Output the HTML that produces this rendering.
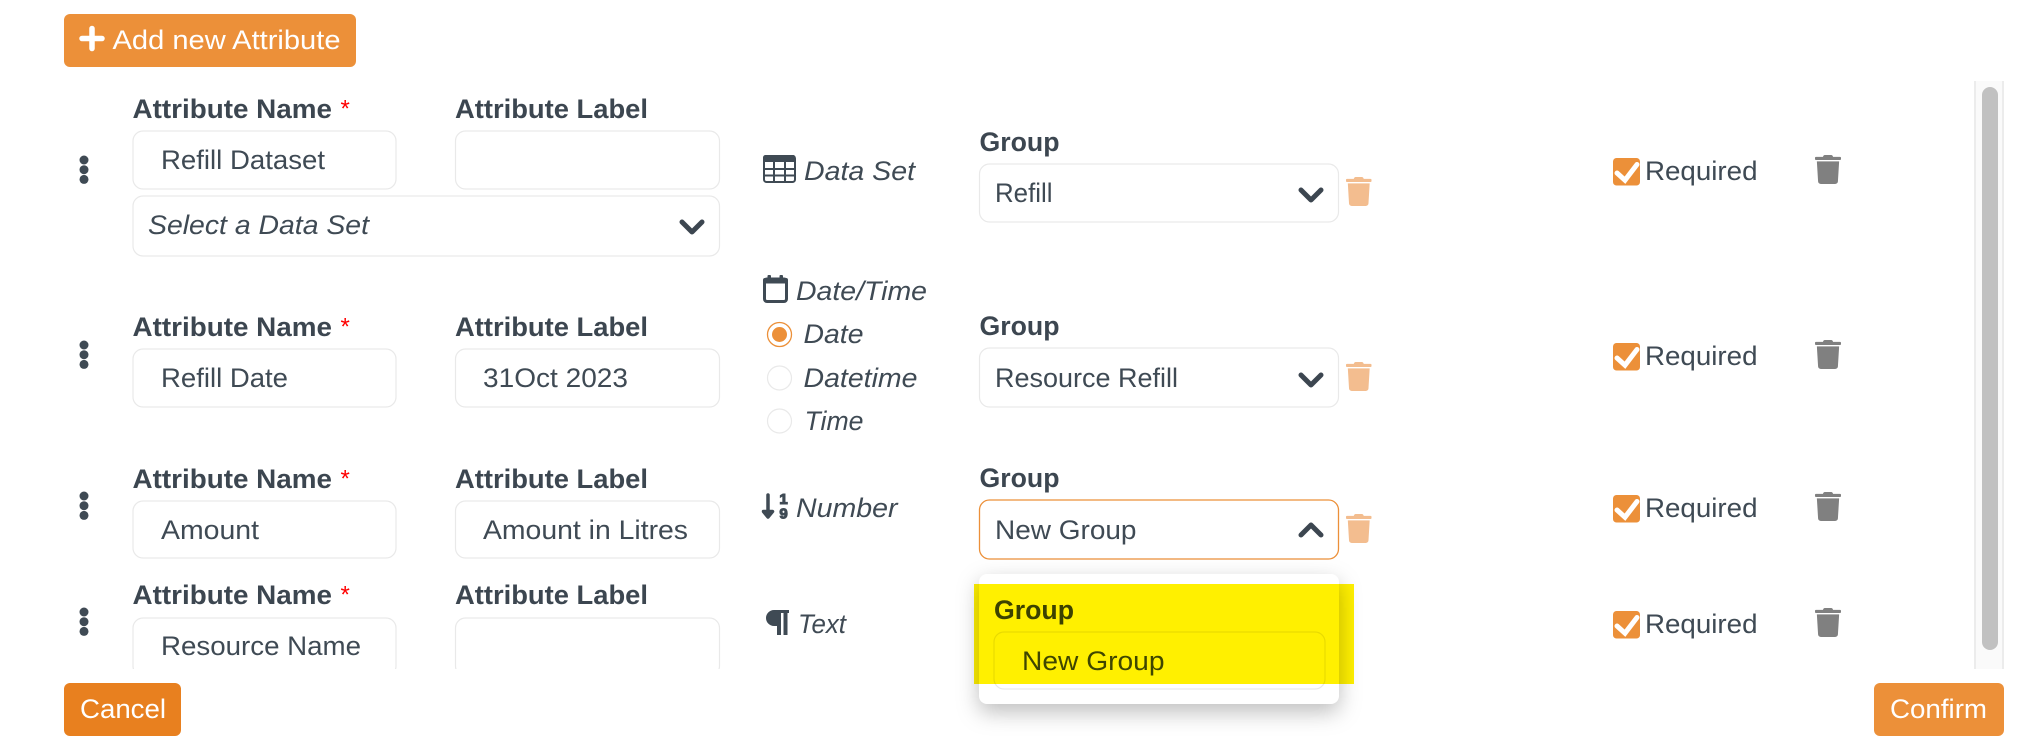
<!DOCTYPE html>
<html lang="en">
<head>
<meta charset="utf-8">
<title>Attributes</title>
<style>
html,body{margin:0;padding:0;background:#fff;width:2024px;height:746px;overflow:hidden}
svg{display:block}
text{font-family:"Liberation Sans",sans-serif;font-size:27px;fill:#3f4a54}
.b{font-weight:700;fill:#3c4650}
.i{font-style:italic}
.w{fill:#fff}
.r{font-size:24px;font-weight:400;fill:#f00}
.n{font-size:15px;font-weight:700;stroke:#3f4a54;stroke-width:1.1}
.box{fill:#fff;stroke:#e9e9e9;stroke-width:1.2}
.chev{fill:none;stroke:#3c4650;stroke-width:5;stroke-linecap:round;stroke-linejoin:round}
.dot{fill:#3f4a54}
</style>
</head>
<body>
<svg width="2024" height="746" viewBox="0 0 2024 746" xmlns="http://www.w3.org/2000/svg">
<defs>
  <symbol id="trash" viewBox="0 0 448 512" preserveAspectRatio="none">
    <path d="M432 32H312l-9.400-18.700A24 24 0 0 0 281.100 0H166.800a23.720 23.720 0 0 0-21.400 13.300L136 32H16A16 16 0 0 0 0 48v24a16 16 0 0 0 16 16h416a16 16 0 0 0 16-16V48a16 16 0 0 0-16-16zM53.200 467a48 48 0 0 0 47.900 45h245.800a48 48 0 0 0 47.900-45L416 112H32z"/>
  </symbol>
  <g id="dots">
    <circle class="dot" cx="0" cy="4" r="4.500"/>
    <circle class="dot" cx="0" cy="13.700" r="4.500"/>
    <circle class="dot" cx="0" cy="23.400" r="4.500"/>
  </g>
  <g id="check">
    <rect width="27" height="27.500" rx="3.500" fill="#ec9039"/>
    <polyline points="4,15 12,22.200 24,6.500" fill="none" stroke="#fff" stroke-width="5" stroke-linecap="round" stroke-linejoin="miter"/>
  </g>
  <clipPath id="listclip"><rect x="0" y="70" width="2024" height="599"/></clipPath>
</defs>

<rect width="2024" height="746" fill="#fff"/>

<!-- Add button -->
<rect x="64" y="14" width="292" height="53" rx="6" fill="#ec9039"/>
<path d="M82 38.500H102M92 28.500V48.500" stroke="#fff" stroke-width="5.500" stroke-linecap="round" fill="none"/>
<text class="w" x="112.500" y="49" textLength="228" lengthAdjust="spacingAndGlyphs">Add new Attribute</text>

<!-- Row 1 -->
<use href="#dots" x="84" y="156"/>
<text class="b" x="132.500" y="118" textLength="199.500" lengthAdjust="spacingAndGlyphs">Attribute Name</text>
<text class="r" x="340.500" y="116.500">*</text>
<text class="b" x="455" y="118" textLength="193" lengthAdjust="spacingAndGlyphs">Attribute Label</text>
<rect class="box" x="133" y="131" width="263" height="58" rx="10"/>
<text x="161" y="169" textLength="164" lengthAdjust="spacingAndGlyphs">Refill Dataset</text>
<rect class="box" x="455.500" y="131" width="264" height="58" rx="10"/>
<rect class="box" x="133" y="196" width="586.500" height="60" rx="10"/>
<text class="i" x="148" y="234" textLength="221" lengthAdjust="spacingAndGlyphs">Select a Data Set</text>
<polyline class="chev" points="682,222 692,232 702,222"/>

<!-- table icon -->
<g>
  <rect x="764" y="156" width="31" height="26" rx="2.500" fill="none" stroke="#3f4a54" stroke-width="2"/>
  <path d="M763 162V157.500a2.500 2.500 0 0 1 2.500-2.500h27.500a2.500 2.500 0 0 1 2.500 2.500v4.500z" fill="#3f4a54"/>
  <path d="M774 162V182M785 162V182M764 169H795M764 175.500H795" stroke="#3f4a54" stroke-width="2" fill="none"/>
</g>
<text class="i" x="804" y="180" textLength="111" lengthAdjust="spacingAndGlyphs">Data Set</text>

<text class="b" x="979.500" y="151" textLength="80" lengthAdjust="spacingAndGlyphs">Group</text>
<rect class="box" x="979.500" y="164" width="359" height="58" rx="10"/>
<text x="995" y="202" textLength="57.500" lengthAdjust="spacingAndGlyphs">Refill</text>
<polyline class="chev" points="1301,190 1311,200 1321,190"/>
<use href="#trash" x="1346" y="177" width="25.500" height="29" fill="#f3bd8f"/>
<use href="#check" x="1613" y="158"/>
<text x="1645" y="180" textLength="112.500" lengthAdjust="spacingAndGlyphs">Required</text>
<use href="#trash" x="1815" y="155" width="26" height="29" fill="#808080"/>

<!-- Row 2 -->
<use href="#dots" x="84" y="341"/>
<text class="b" x="132.500" y="336" textLength="199.500" lengthAdjust="spacingAndGlyphs">Attribute Name</text>
<text class="r" x="340.500" y="334.500">*</text>
<text class="b" x="455" y="336" textLength="193" lengthAdjust="spacingAndGlyphs">Attribute Label</text>
<rect class="box" x="133" y="349" width="263" height="58" rx="10"/>
<text x="161" y="387" textLength="127" lengthAdjust="spacingAndGlyphs">Refill Date</text>
<rect class="box" x="455.500" y="349" width="264" height="58" rx="10"/>
<text x="483" y="387" textLength="145" lengthAdjust="spacingAndGlyphs">31Oct 2023</text>

<!-- calendar icon -->
<g>
  <rect x="764.500" y="279" width="22" height="22.500" rx="2.500" fill="none" stroke="#3f4a54" stroke-width="3"/>
  <rect x="763" y="278" width="25" height="5.500" rx="2" fill="#3f4a54"/>
  <rect x="767.500" y="275" width="3.500" height="5" rx="1" fill="#3f4a54"/>
  <rect x="779.500" y="275" width="3.500" height="5" rx="1" fill="#3f4a54"/>
</g>
<text class="i" x="796" y="300" textLength="131" lengthAdjust="spacingAndGlyphs">Date/Time</text>

<circle cx="779.500" cy="334.500" r="12" fill="#fff" stroke="#ec9039" stroke-width="1.300"/>
<circle cx="779.500" cy="334.500" r="7.500" fill="#ec9039"/>
<text class="i" x="803.500" y="343" textLength="60" lengthAdjust="spacingAndGlyphs">Date</text>
<circle cx="779.500" cy="378" r="12" fill="#fff" stroke="#e9e9e9" stroke-width="1.200"/>
<text class="i" x="803.500" y="387" textLength="114" lengthAdjust="spacingAndGlyphs">Datetime</text>
<circle cx="779.500" cy="421" r="12" fill="#fff" stroke="#e9e9e9" stroke-width="1.200"/>
<text class="i" x="804.500" y="430" textLength="59" lengthAdjust="spacingAndGlyphs">Time</text>

<text class="b" x="979.500" y="335" textLength="80" lengthAdjust="spacingAndGlyphs">Group</text>
<rect class="box" x="979.500" y="348" width="359" height="59" rx="10"/>
<text x="995" y="387" textLength="183" lengthAdjust="spacingAndGlyphs">Resource Refill</text>
<polyline class="chev" points="1301,375 1311,385 1321,375"/>
<use href="#trash" x="1346" y="362" width="25.500" height="29" fill="#f3bd8f"/>
<use href="#check" x="1613" y="343"/>
<text x="1645" y="365" textLength="112.500" lengthAdjust="spacingAndGlyphs">Required</text>
<use href="#trash" x="1815" y="340" width="26" height="29" fill="#808080"/>

<!-- Row 3 -->
<use href="#dots" x="84" y="492"/>
<text class="b" x="132.500" y="488" textLength="199.500" lengthAdjust="spacingAndGlyphs">Attribute Name</text>
<text class="r" x="340.500" y="486.500">*</text>
<text class="b" x="455" y="488" textLength="193" lengthAdjust="spacingAndGlyphs">Attribute Label</text>
<rect class="box" x="133" y="501" width="263" height="57" rx="10"/>
<text x="161" y="539" textLength="98" lengthAdjust="spacingAndGlyphs">Amount</text>
<rect class="box" x="455.500" y="501" width="264" height="57" rx="10"/>
<text x="483" y="539" textLength="205" lengthAdjust="spacingAndGlyphs">Amount in Litres</text>

<!-- number icon -->
<path d="M768 495V514M763.500 511.500L768 517L772.500 511.500Z" stroke="#3f4a54" stroke-width="3.500" stroke-linejoin="round" stroke-linecap="round" fill="#3f4a54"/>
<text class="n" x="783.500" y="504" text-anchor="middle">1</text>
<text class="n" x="783.500" y="518.500" text-anchor="middle">9</text>
<text class="i" x="796" y="517" textLength="101.500" lengthAdjust="spacingAndGlyphs">Number</text>

<text class="b" x="979.500" y="487" textLength="80" lengthAdjust="spacingAndGlyphs">Group</text>
<rect x="979.500" y="500" width="359" height="59" rx="10" fill="#fff" stroke="#ec9039" stroke-width="1.300"/>
<text x="995" y="539" textLength="141.500" lengthAdjust="spacingAndGlyphs">New Group</text>
<polyline class="chev" points="1301,535 1311,525 1321,535"/>
<use href="#trash" x="1346" y="514" width="25.500" height="29" fill="#f3bd8f"/>
<use href="#check" x="1613" y="495"/>
<text x="1645" y="517" textLength="112.500" lengthAdjust="spacingAndGlyphs">Required</text>
<use href="#trash" x="1815" y="492" width="26" height="29" fill="#808080"/>

<!-- Row 4 (clipped by scroll area) -->
<g clip-path="url(#listclip)">
  <use href="#dots" x="84" y="608"/>
  <text class="b" x="132.500" y="604" textLength="199.500" lengthAdjust="spacingAndGlyphs">Attribute Name</text>
  <text class="r" x="340.500" y="602.500">*</text>
  <text class="b" x="455" y="604" textLength="193" lengthAdjust="spacingAndGlyphs">Attribute Label</text>
  <rect class="box" x="133" y="618" width="263" height="58" rx="10"/>
  <text x="161" y="655" textLength="200" lengthAdjust="spacingAndGlyphs">Resource Name</text>
  <rect class="box" x="455.500" y="618" width="264" height="58" rx="10"/>
</g>
<path d="M789 610H774a8 8 0 0 0 0 16h3v9h4v-22h2.500v22h4v-22h1.500z" fill="#3f4a54"/>
<text class="i" x="798" y="633" textLength="48" lengthAdjust="spacingAndGlyphs">Text</text>
<use href="#check" x="1613" y="611"/>
<text x="1645" y="633" textLength="112.500" lengthAdjust="spacingAndGlyphs">Required</text>
<use href="#trash" x="1815" y="608" width="26" height="29" fill="#808080"/>

<!-- Scrollbar -->
<rect x="1974" y="81" width="30" height="588" fill="#fafafa"/>
<rect x="1974" y="81" width="2" height="588" fill="#ececec"/>
<rect x="2002" y="81" width="2" height="588" fill="#ececec"/>
<rect x="1982" y="87" width="16" height="563" rx="8" fill="#c1c1c1"/>

<!-- Dropdown -->
<rect x="979" y="574" width="360" height="130" rx="8" fill="#fff" style="filter:drop-shadow(0 8px 11px rgba(0,0,0,.26))"/>
<text class="b" x="994" y="619" textLength="80" lengthAdjust="spacingAndGlyphs">Group</text>
<rect x="994" y="632" width="331" height="57" rx="10" fill="#fff" stroke="#e9e9e9" stroke-width="1.200"/>
<text x="1022" y="670" textLength="142.500" lengthAdjust="spacingAndGlyphs">New Group</text>

<!-- Highlight -->
<rect x="974" y="584" width="380" height="100" fill="#fff000" style="mix-blend-mode:multiply"/>

<!-- Footer buttons -->
<rect x="64" y="683" width="117" height="53" rx="6" fill="#e8801f"/>
<text class="w" x="80" y="718" textLength="86" lengthAdjust="spacingAndGlyphs">Cancel</text>
<rect x="1874" y="683" width="130" height="53" rx="6" fill="#ec9039"/>
<text class="w" x="1890" y="718" textLength="97" lengthAdjust="spacingAndGlyphs">Confirm</text>
</svg>
</body>
</html>
